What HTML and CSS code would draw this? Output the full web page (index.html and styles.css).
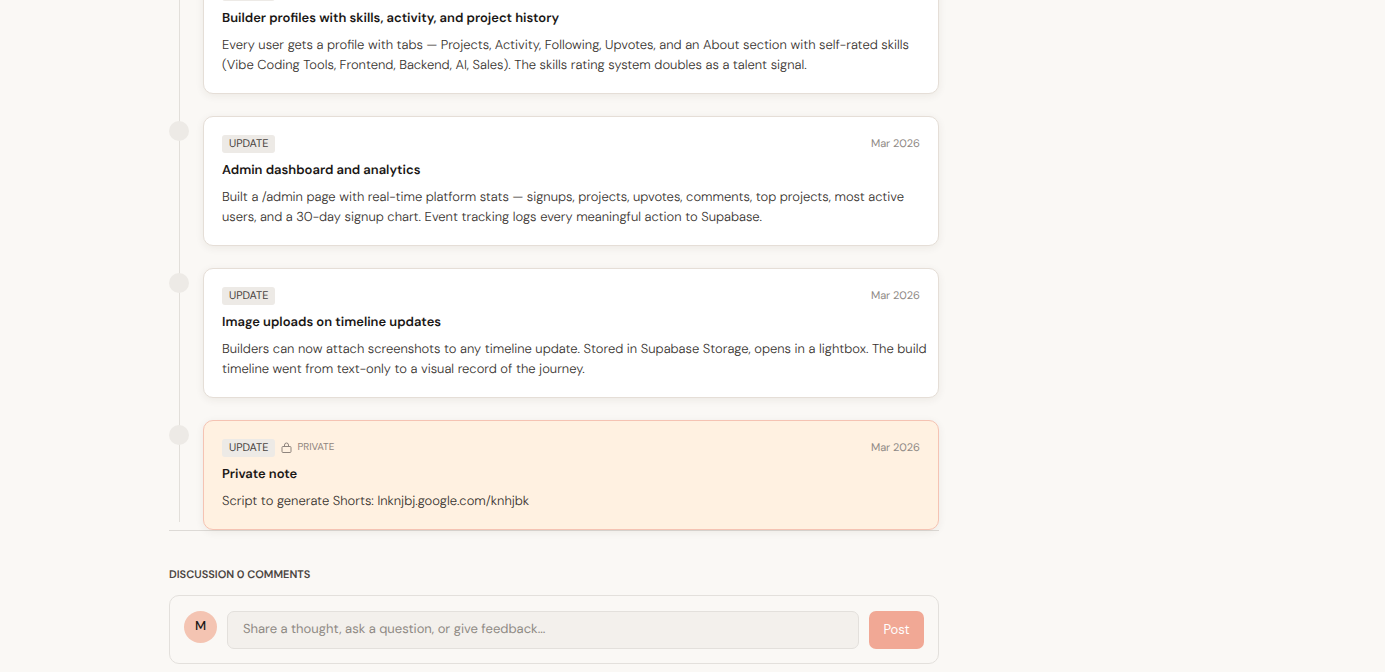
FILE: index.html
```
<!DOCTYPE html>
<html lang="en">
<head>
    <meta charset="UTF-8">
    <meta name="viewport" content="width=device-width, initial-scale=1.0">
    <title>Project timeline</title>
    <link rel="stylesheet" href="styles.css">
</head>
<body>
    <div class="page">
        <main class="content">
            <!-- Build timeline -->
            <section class="timeline">
                <article class="entry">
                    <span class="dot"></span>
                    <div class="card">
                        <div class="card-head">
                            <span class="badge">UPDATE</span>
                            <time class="date">Mar 2026</time>
                        </div>
                        <h3 class="title">Builder profiles with skills, activity, and project history</h3>
                        <p class="text">Every user gets a profile with tabs — Projects, Activity, Following, Upvotes, and an About section with self-rated skills (Vibe Coding Tools, Frontend, Backend, AI, Sales). The skills rating system doubles as a talent signal.</p>
                    </div>
                </article>
                <article class="entry">
                    <span class="dot"></span>
                    <div class="card">
                        <div class="card-head">
                            <span class="badge">UPDATE</span>
                            <time class="date">Mar 2026</time>
                        </div>
                        <h3 class="title">Admin dashboard and analytics</h3>
                        <p class="text">Built a /admin page with real-time platform stats — signups, projects, upvotes, comments, top projects, most active users, and a 30-day signup chart. Event tracking logs every meaningful action to Supabase.</p>
                    </div>
                </article>
                <article class="entry">
                    <span class="dot"></span>
                    <div class="card">
                        <div class="card-head">
                            <span class="badge">UPDATE</span>
                            <time class="date">Mar 2026</time>
                        </div>
                        <h3 class="title">Image uploads on timeline updates</h3>
                        <p class="text">Builders can now attach screenshots to any timeline update. Stored in Supabase Storage, opens in a lightbox. The build timeline went from text-only to a visual record of the journey.</p>
                    </div>
                </article>
                <article class="entry">
                    <span class="dot"></span>
                    <div class="card card-private">
                        <div class="card-head">
                            <span class="badge">UPDATE</span>
                            <span class="private">
                                <svg class="lock" viewBox="0 0 11 11" fill="none" stroke="currentColor" aria-hidden="true">
                                    <rect x="1" y="4.5" width="9" height="6" rx="1"/>
                                    <path d="M3.5 4.5V3a2 2 0 0 1 4 0v1.5"/>
                                </svg>
                                <span>PRIVATE</span>
                            </span>
                            <time class="date">Mar 2026</time>
                        </div>
                        <h3 class="title">Private note</h3>
                        <p class="text">Script to generate Shorts: lnknjbj.google.com/knhjbk</p>
                    </div>
                </article>
            </section>

            <!-- Comments -->
            <section class="discussion">
                <h2 class="discussion-title">DISCUSSION 0 COMMENTS</h2>
                <form class="composer">
                    <span class="avatar">M</span>
                    <input class="comment-input" type="text" aria-label="Comment" placeholder="Share a thought, ask a question, or give feedback...">
                    <button class="post-button" type="button">Post</button>
                </form>
            </section>
        </main>
    </div>
</body>
</html>
```
FILE: styles.css
```
* {
    box-sizing: border-box;
}

body {
    margin: 0;
    background-color: #faf8f5;
    color: #1a1715;
    font-family: "DM Sans", Inter, "Open Sans", sans-serif;
    font-size: 13px;
    text-rendering: geometricPrecision;
}

/* Main column with an empty side column */
.page {
    display: grid;
    grid-template-columns: minmax(0, 1fr) 240px;
    gap: 37px;
    max-width: 1047px;
    margin: -36px auto 0; /* Page is scrolled into the first entry */
}

/* Timeline */
.timeline {
    position: relative;
    display: flex;
    flex-direction: column;
    gap: 22px;
}

.timeline::before {
    content: "";
    position: absolute;
    top: 0;
    bottom: 8px;
    left: 10px;
    width: 1px;
    background-color: #e2dfda;
}

.entry {
    display: grid;
    grid-template-columns: 20px minmax(0, 1fr);
    gap: 14px;
}

.dot {
    position: relative; /* Keeps the dot above the line */
    width: 20px;
    height: 20px;
    margin-top: 5px;
    border-radius: 50%;
    background-color: #edeae6;
}

.card {
    padding: 18px 18px 17px;
    border: 1px solid #e5ded7;
    border-radius: 10px;
    background-color: #fff;
    box-shadow: 0 2px 8px rgba(60, 40, 20, 0.07);
}

.card-private {
    border-color: #f5c3b3;
    background-color: #fff1e1;
}

.card-head {
    display: flex;
    align-items: center;
    gap: 6px;
    height: 18px;
}

.badge {
    padding: 1px 7px 0;
    border-radius: 3px;
    background-color: #edeae6;
    color: #4a4541;
    font-size: 11px;
    line-height: 17px;
}

.private {
    display: flex;
    gap: 5px;
    align-self: flex-start;
    color: #8f857e;
    font-size: 10px;
    line-height: 18px;
}

.lock {
    width: 11px;
    height: 11px;
    margin-top: 3px;
}

.date {
    margin-left: auto;
    color: #8f8a86;
    font-size: 11px;
    line-height: 20px;
}

.title {
    margin: 8px 0 7px;
    font-size: 13px;
    font-weight: 600;
    line-height: 20px;
}

.text {
    margin: 0 -8px 0 0; /* Long lines run into the card padding */
    color: #38332f;
    font-weight: 300;
    line-height: 20px;
}

/* Discussion */
.discussion {
    padding-top: 36px;
    border-top: 1px solid #dddad6;
}

.discussion-title {
    margin: 0 0 12px;
    color: #4a4541;
    font-size: 11px;
    font-weight: 600;
    line-height: 16px;
}

.composer {
    display: flex;
    gap: 10px;
    padding: 15px 14px 14px;
    border: 1px solid #e3e0dc;
    border-radius: 10px;
}

.avatar {
    width: 33px;
    height: 32px;
    border-radius: 50%;
    background-color: #f4c4b2;
    font-weight: 500;
    line-height: 31px;
    text-align: center;
}

.comment-input {
    flex: 1;
    min-width: 0;
    height: 38px;
    padding: 0 15px 2px;
    border: 1px solid #e3e0dc;
    border-radius: 7px;
    background-color: #f3f0ec;
    color: #1a1715;
    font: inherit;
    text-rendering: inherit;
}

.comment-input::placeholder {
    color: #8f8a84;
}

.post-button {
    width: 55px;
    height: 38px;
    padding: 0 0 2px;
    border: none;
    border-radius: 7px;
    background-color: #f1a895;
    color: #fff;
    font: inherit;
    cursor: pointer;
}
```
